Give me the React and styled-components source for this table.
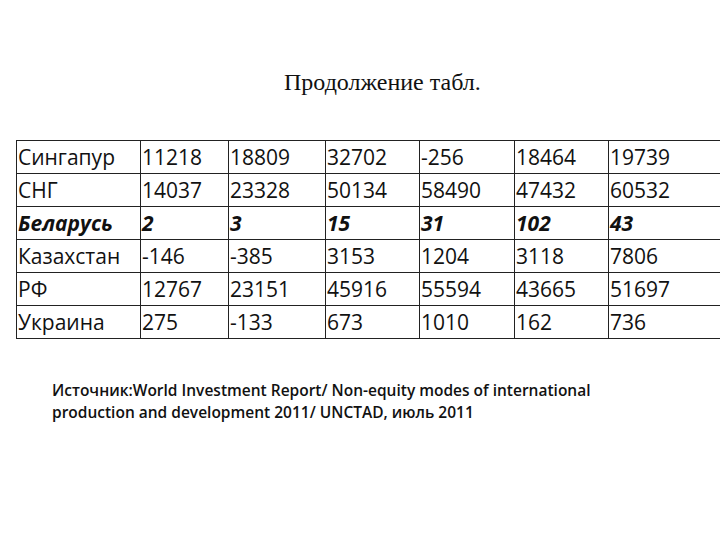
import React from 'react';
import styled, { createGlobalStyle } from 'styled-components';

const Global = createGlobalStyle`
  html, body { margin: 0; padding: 0; background: #fff; }
  body { overflow: hidden; }
`;

const Page = styled.div`
  width: 720px;
  height: 540px;
  overflow: hidden;
  padding-top: 70px;
  box-sizing: border-box;
  color: #111;
`;

const Title = styled.div`
  margin-left: 284px;
  font-family: 'Liberation Serif', 'Times New Roman', serif;
  font-size: 24px;
  line-height: 24px;
`;

const Table = styled.table`
  margin-top: 46px;
  margin-left: 16px;
  border-collapse: collapse;
  table-layout: fixed;
  width: 824px;
  font-family: 'Open Sans', 'Noto Sans', sans-serif;
  font-size: 21px;
`;

const Cell = styled.td`
  border: 1px solid #222;
  height: 32px;
  padding: 0 0 0 1px;
  line-height: 32px;
  white-space: nowrap;
  font-weight: ${p => (p.$strong ? 700 : 400)};
  font-style: ${p => (p.$strong ? 'italic' : 'normal')};
`;

const Source = styled.p`
  margin: 40px 0 0 52px;
  width: 600px;
  font-family: 'Open Sans', 'Noto Sans', sans-serif;
  font-size: 15.5px;
  font-weight: 600;
  line-height: 22px;
`;

const widths = [124, 88, 97, 94, 95, 94, 232];

const rows = [
  ['Сингапур', '11218', '18809', '32702', '-256', '18464', '19739'],
  ['СНГ', '14037', '23328', '50134', '58490', '47432', '60532'],
  ['Беларусь', '2', '3', '15', '31', '102', '43', true],
  ['Казахстан', '-146', '-385', '3153', '1204', '3118', '7806'],
  ['РФ', '12767', '23151', '45916', '55594', '43665', '51697'],
  ['Украина', '275', '-133', '673', '1010', '162', '736'],
];

export default function App() {
  return (
    <Page>
      <Global />
      <Title>Продолжение табл.</Title>
      <Table>
        <colgroup>
          {widths.map((w, i) => <col key={i} style={{ width: w }} />)}
        </colgroup>
        <tbody>
          {rows.map((r, i) => (
            <tr key={i}>
              {r.slice(0, 7).map((c, j) => (
                <Cell key={j} $strong={r[7]}>{c}</Cell>
              ))}
            </tr>
          ))}
        </tbody>
      </Table>
      <Source>
        Источник:World Investment Report/ Non-equity modes of international
        <br />
        production and development 2011/ UNCTAD, июль 2011
      </Source>
    </Page>
  );
}
